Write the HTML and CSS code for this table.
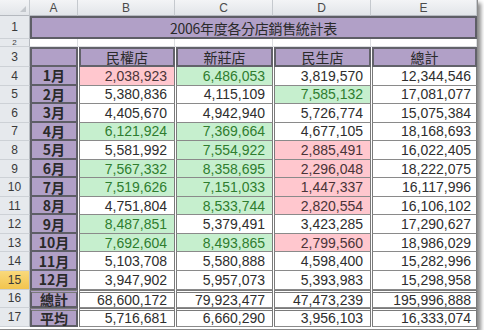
FILE: index.html
```html
<!DOCTYPE html>
<html lang="zh-Hant">
<head>
<meta charset="utf-8">
<title>2006年度各分店銷售統計表</title>
<link rel="stylesheet" href="styles.css">
</head>
<body>
<div class="frame">
  <div class="sheet">
    <div class="ch corner"><span class="tri"></span></div>
    <div class="ch">A</div>
    <div class="ch">B</div>
    <div class="ch">C</div>
    <div class="ch">D</div>
    <div class="ch">E</div>

    <div class="rh">1</div>
    <div class="title">2006年度各分店銷售統計表</div>

    <div class="rh r2"><span>2</span></div>
    <div class="blank"></div><div class="blank"></div><div class="blank"></div><div class="blank"></div><div class="blank"></div>

    <div class="rh">3</div>
    <div class="hd hd-a"></div>
    <div class="hd">民權店</div>
    <div class="hd">新莊店</div>
    <div class="hd">民生店</div>
    <div class="hd">總計</div>

    <div class="rh">4</div><div class="lab">1月</div><div class="n p">2,038,923</div><div class="n g">6,486,053</div><div class="n">3,819,570</div><div class="n e">12,344,546</div>
    <div class="rh">5</div><div class="lab">2月</div><div class="n">5,380,836</div><div class="n">4,115,109</div><div class="n g">7,585,132</div><div class="n e">17,081,077</div>
    <div class="rh">6</div><div class="lab">3月</div><div class="n">4,405,670</div><div class="n">4,942,940</div><div class="n">5,726,774</div><div class="n e">15,075,384</div>
    <div class="rh">7</div><div class="lab">4月</div><div class="n g">6,121,924</div><div class="n g">7,369,664</div><div class="n">4,677,105</div><div class="n e">18,168,693</div>
    <div class="rh">8</div><div class="lab">5月</div><div class="n">5,581,992</div><div class="n g">7,554,922</div><div class="n p">2,885,491</div><div class="n e">16,022,405</div>
    <div class="rh">9</div><div class="lab">6月</div><div class="n g">7,567,332</div><div class="n g">8,358,695</div><div class="n p">2,296,048</div><div class="n e">18,222,075</div>
    <div class="rh">10</div><div class="lab">7月</div><div class="n g">7,519,626</div><div class="n g">7,151,033</div><div class="n p">1,447,337</div><div class="n e">16,117,996</div>
    <div class="rh">11</div><div class="lab">8月</div><div class="n">4,751,804</div><div class="n g">8,533,744</div><div class="n p">2,820,554</div><div class="n e">16,106,102</div>
    <div class="rh">12</div><div class="lab">9月</div><div class="n g">8,487,851</div><div class="n">5,379,491</div><div class="n">3,423,285</div><div class="n e">17,290,627</div>
    <div class="rh">13</div><div class="lab">10月</div><div class="n g">7,692,604</div><div class="n g">8,493,865</div><div class="n p">2,799,560</div><div class="n e">18,986,029</div>
    <div class="rh">14</div><div class="lab">11月</div><div class="n">5,103,708</div><div class="n">5,580,888</div><div class="n">4,598,400</div><div class="n e">15,282,996</div>
    <div class="rh sel">15</div><div class="lab">12月</div><div class="n">3,947,902</div><div class="n">5,957,073</div><div class="n">5,393,983</div><div class="n e">15,298,958</div>
    <div class="rh">16</div><div class="lab dbl">總計</div><div class="n dbl">68,600,172</div><div class="n dbl">79,923,477</div><div class="n dbl">47,473,239</div><div class="n e dbl">195,996,888</div>
    <div class="rh">17</div><div class="lab dbl">平均</div><div class="n dbl">5,716,681</div><div class="n dbl">6,660,290</div><div class="n dbl">3,956,103</div><div class="n e dbl">16,333,074</div>
  </div>
</div>
</body>
</html>
```

FILE: styles.css
```css
html, body {
  margin: 0;
  padding: 0;
  background: #ffffff;
}

.frame {
  width: 477px;
  height: 329px;
  overflow: hidden;
  background: #ffffff;
  border-right: 1px solid #8c8c8c;
  border-bottom: 1px solid #8c8c8c;
  box-shadow: 3px 3px 4px rgba(0, 0, 0, 0.45);
}

.sheet {
  display: grid;
  grid-template-columns: 30px 48px 97px 98px 98px 106px;
  grid-template-rows: 16px 23px 8px 20px repeat(14, 18.55px);
  font-family: "Liberation Sans", "Noto Sans CJK TC", sans-serif;
  font-size: 14px;
  color: #2e2e2e;
}

.sheet > div {
  box-sizing: border-box;
  min-width: 0;
}

.ch {
  background: linear-gradient(#f3f4f6, #e2e5e9);
  border-right: 1px solid #c5c9ce;
  border-bottom: 1px solid #b5b9bf;
  font-size: 12px;
  color: #4a4a4a;
  display: flex;
  align-items: center;
  justify-content: center;
}

.corner {
  position: relative;
}

.tri {
  position: absolute;
  right: 3px;
  bottom: 3px;
  width: 0;
  height: 0;
  border-left: 6px solid transparent;
  border-bottom: 6px solid #c3c7cc;
}

.rh {
  background: #e6e9ed;
  border-right: 1px solid #b5b9bf;
  border-bottom: 1px solid #cdd1d6;
  font-size: 12px;
  color: #3a3a3a;
  display: flex;
  align-items: center;
  justify-content: center;
}

.rh.r2 {
  font-size: 8px;
  line-height: 7px;
}

.rh.r2 span {
  line-height: 7px;
}

.rh.sel {
  background: linear-gradient(#f9d97c, #f2c44e);
  color: #3a3a3a;
}

.title {
  grid-column: 2 / span 5;
  background: #b1a0c7;
  border: 2px solid #5e5e66;
  display: flex;
  align-items: center;
  justify-content: center;
  font-family: "Noto Sans CJK TC", sans-serif;
  font-size: 14px;
  color: #2a2a2a;
  letter-spacing: -0.3px;
}

.blank {
  background: #ffffff;
  border-right: 1px solid #dcdee1;
  border-bottom: 1px solid #dcdee1;
}

.hd {
  background: #b1a0c7;
  border: 2px solid #62626a;
  margin-left: 1px;
  display: flex;
  align-items: center;
  justify-content: center;
  font-family: "Noto Sans CJK TC", sans-serif;
  font-size: 14px;
  color: #2a2a2a;
}

.hd-a {
  margin-left: 0;
}

.lab {
  background: #b1a0c7;
  border: 2px solid #5e5e66;
  border-top: 0;
  display: flex;
  align-items: center;
  justify-content: center;
  font-family: "Noto Sans CJK TC", sans-serif;
  font-weight: 700;
  font-size: 14px;
  color: #2a2a2a;
}

.n {
  background: #ffffff;
  border-left: 1px solid #7a7a7a;
  border-right: 1px solid #7a7a7a;
  border-bottom: 1px solid #8a8a8a;
  margin-left: 1px;
  display: flex;
  align-items: center;
  justify-content: flex-end;
  padding-right: 7px;
  color: #2e2e2e;
}

.n.e {
  padding-right: 5px;
}

.n.g {
  background: #c6efce;
  color: #2f7d2f;
}

.n.p {
  background: #ffc7ce;
  color: #4a3438;
}

.dbl {
  border-top: 3px double #7a7a7a;
}
```
